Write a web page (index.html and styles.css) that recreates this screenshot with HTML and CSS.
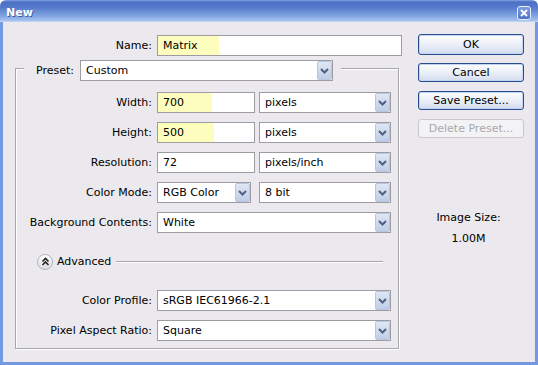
FILE: index.html
```html
<!DOCTYPE html>
<html>
<head>
  <title>New</title>
  <link rel="stylesheet" href="styles.css">
</head>
<body>
  <div class="window">
    <div class="titlebar">
      <span class="title">New</span>
      <span class="close">
        <svg width="8" height="8" viewBox="0 0 8 8"><path d="M1 1 L7 7 M7 1 L1 7" stroke="#fff" stroke-width="2" fill="none"/></svg>
      </span>
    </div>
    <div class="frame">
      <div class="form">
        <div class="row name-row">
          <label class="lbl">Name:</label>
          <div class="field w-name"><span class="hl hl-name">Matrix</span></div>
        </div>
        <div class="group">
          <div class="preset">
            <label>Preset:</label>
            <div class="field combo w-preset"><span class="val">Custom</span><i class="arrow"><svg width="9" height="6" viewBox="0 0 9 6"><path d="M1 1 L4.5 4.5 L8 1" stroke="#4d6185" stroke-width="2" fill="none"/></svg></i></div>
          </div>
          <div class="row first">
            <label class="lbl lbl-g">Width:</label>
            <div class="field w-num"><span class="hl hl-w">700</span></div>
            <div class="field combo w-unit"><span class="val">pixels</span><i class="arrow"><svg width="9" height="6" viewBox="0 0 9 6"><path d="M1 1 L4.5 4.5 L8 1" stroke="#4d6185" stroke-width="2" fill="none"/></svg></i></div>
          </div>
          <div class="row">
            <label class="lbl lbl-g">Height:</label>
            <div class="field w-num"><span class="hl hl-h">500</span></div>
            <div class="field combo w-unit"><span class="val">pixels</span><i class="arrow"><svg width="9" height="6" viewBox="0 0 9 6"><path d="M1 1 L4.5 4.5 L8 1" stroke="#4d6185" stroke-width="2" fill="none"/></svg></i></div>
          </div>
          <div class="row">
            <label class="lbl lbl-g">Resolution:</label>
            <div class="field w-num"><span class="val">72</span></div>
            <div class="field combo w-unit"><span class="val">pixels/inch</span><i class="arrow"><svg width="9" height="6" viewBox="0 0 9 6"><path d="M1 1 L4.5 4.5 L8 1" stroke="#4d6185" stroke-width="2" fill="none"/></svg></i></div>
          </div>
          <div class="row">
            <label class="lbl lbl-g">Color Mode:</label>
            <div class="field combo w-mode"><span class="val">RGB Color</span><i class="arrow"><svg width="9" height="6" viewBox="0 0 9 6"><path d="M1 1 L4.5 4.5 L8 1" stroke="#4d6185" stroke-width="2" fill="none"/></svg></i></div>
            <div class="field combo w-unit"><span class="val">8 bit</span><i class="arrow"><svg width="9" height="6" viewBox="0 0 9 6"><path d="M1 1 L4.5 4.5 L8 1" stroke="#4d6185" stroke-width="2" fill="none"/></svg></i></div>
          </div>
          <div class="row">
            <label class="lbl lbl-g">Background Contents:</label>
            <div class="field combo w-full"><span class="val">White</span><i class="arrow"><svg width="9" height="6" viewBox="0 0 9 6"><path d="M1 1 L4.5 4.5 L8 1" stroke="#4d6185" stroke-width="2" fill="none"/></svg></i></div>
          </div>
          <div class="advanced">
            <span class="adv-btn">
              <svg width="9" height="9" viewBox="0 0 9 9"><path d="M1.5 4.5 L4.5 1.5 L7.5 4.5 M1.5 8 L4.5 5 L7.5 8" stroke="#222" stroke-width="1.6" fill="none"/></svg>
            </span>
            <span>Advanced</span>
            <span class="rule"></span>
          </div>
          <div class="row adv-first">
            <label class="lbl lbl-g">Color Profile:</label>
            <div class="field combo w-full"><span class="val">sRGB IEC61966-2.1</span><i class="arrow"><svg width="9" height="6" viewBox="0 0 9 6"><path d="M1 1 L4.5 4.5 L8 1" stroke="#4d6185" stroke-width="2" fill="none"/></svg></i></div>
          </div>
          <div class="row">
            <label class="lbl lbl-g">Pixel Aspect Ratio:</label>
            <div class="field combo w-full"><span class="val">Square</span><i class="arrow"><svg width="9" height="6" viewBox="0 0 9 6"><path d="M1 1 L4.5 4.5 L8 1" stroke="#4d6185" stroke-width="2" fill="none"/></svg></i></div>
          </div>
        </div>
      </div>
      <div class="side">
        <button class="btn btn-ok">OK</button>
        <button class="btn">Cancel</button>
        <button class="btn">Save Preset...</button>
        <button class="btn" disabled>Delete Preset...</button>
        <div class="image-size">
          <div>Image Size:</div>
          <div>1.00M</div>
        </div>
      </div>
    </div>
  </div>
</body>
</html>
```
FILE: styles.css
```css
body {
  margin: 0;
  background-color: #fff;
  font-family: "DejaVu Sans", sans-serif;
  font-size: 11px;
  color: #000;
}

.window {
  width: 538px;
  height: 365px;
  display: flex;
  flex-direction: column;
  background-color: #ebe9ed;
  border-radius: 6px 6px 0 0;
  overflow: hidden;
}

.titlebar {
  height: 22px;
  flex: none;
  display: flex;
  align-items: center;
  justify-content: space-between;
  padding: 0 7px 0 6px;
  background: linear-gradient(to bottom, #86a5e4 0, #4c70c4 2px, #5479c9 7px, #7b9fde 15px, #a8c5f1 21px, #d4e2f7 22px);
  color: #fff;
}

.title {
  font-weight: bold;
  font-size: 11px;
  padding-top: 3px;
  text-shadow: 1px 1px 0 #3d5ea8;
}

.close {
  width: 14px;
  height: 14px;
  box-sizing: border-box;
  display: flex;
  align-items: center;
  justify-content: center;
  margin-top: 3px;
  border: 1px solid #e8eefb;
  border-radius: 3px;
  background: linear-gradient(to bottom, #7d9de2, #4d72c8);
}

.frame {
  flex: 1;
  display: flex;
  border: 3px solid #7399e0;
  border-top: 0;
}

.form {
  width: 415px;
  padding-top: 13px;
}

.row {
  display: flex;
  align-items: center;
}

.lbl {
  width: 149px;
  margin-right: 5px;
  text-align: right;
  white-space: nowrap;
}

.lbl-g {
  width: 136px;
}

.field {
  height: 21px;
  box-sizing: border-box;
  display: flex;
  align-items: center;
  border: 1px solid #9d9ca2;
  background-color: #fff;
}

.val {
  flex: 1;
  padding-left: 5px;
  white-space: nowrap;
}

.hl {
  align-self: stretch;
  display: flex;
  align-items: center;
  box-sizing: border-box;
  padding-left: 5px;
  background-color: #fdfdbd;
}

.hl-name { width: 61px; }
.hl-w { width: 54px; }
.hl-h { width: 56px; }

.arrow {
  width: 15px;
  height: 19px;
  box-sizing: border-box;
  display: flex;
  align-items: center;
  justify-content: center;
  border: 1px solid #b9c6e0;
  border-radius: 2px;
  background: linear-gradient(to bottom, #e0e7f5, #c0cde6);
}

.w-name { width: 245px; }
.w-preset { width: 253px; }
.w-num { width: 98px; margin-right: 4px; }
.w-unit { width: 132px; }
.w-mode { width: 94px; margin-right: 8px; }
.w-full { width: 234px; }

.group {
  width: 384px;
  box-sizing: border-box;
  margin: 12px 0 0 12px;
  padding-bottom: 7px;
  display: flex;
  flex-direction: column;
  border: 1px solid #a7a6aa;
  box-shadow: inset 1px 1px 0 #fff, 1px 1px 0 #fff;
}

.group .row {
  margin-top: 9px;
}

.group .row.first {
  margin-top: 11px;
}

.group .row.adv-first {
  margin-top: 19px;
}

.preset {
  align-self: flex-start;
  display: flex;
  align-items: center;
  margin: -9px 0 0 8px;
  padding: 0 8px 0 12px;
  background-color: #ebe9ed;
}

.preset label {
  margin-right: 6px;
}

.advanced {
  height: 19px;
  margin-top: 19px;
  padding-left: 21px;
  display: flex;
  align-items: center;
}

.adv-btn {
  width: 16px;
  height: 16px;
  box-sizing: border-box;
  margin-right: 4px;
  display: flex;
  align-items: center;
  justify-content: center;
  border: 1px solid #b4b3b8;
  border-radius: 50%;
  background: linear-gradient(to bottom, #fff, #dcdbe0);
}

.rule {
  flex: 1;
  margin: 0 15px 0 5px;
  border-top: 1px solid #a7a6aa;
  border-bottom: 1px solid #fff;
}

.side {
  width: 106px;
  padding-top: 12px;
  display: flex;
  flex-direction: column;
}

.btn {
  height: 19px;
  margin: 0 0 9px 0;
  padding: 0;
  font-family: "DejaVu Sans", sans-serif;
  font-size: 11px;
  color: #000;
  border: 1px solid #284e8e;
  border-radius: 3px;
  background: linear-gradient(to bottom, #fdfdfe, #eef1f8 45%, #d2dbee);
  box-shadow: inset 0 0 0 1px #c3d3f3;
}

.btn-ok {
  height: 21px;
  margin-bottom: 8px;
}

.btn:disabled {
  color: #aaa9ae;
  border-color: #c9c8cc;
  background: #f3f2f4;
  box-shadow: none;
}

.image-size {
  margin-top: 60px;
  line-height: 21px;
  text-align: center;
  padding-right: 5px;
}
```
